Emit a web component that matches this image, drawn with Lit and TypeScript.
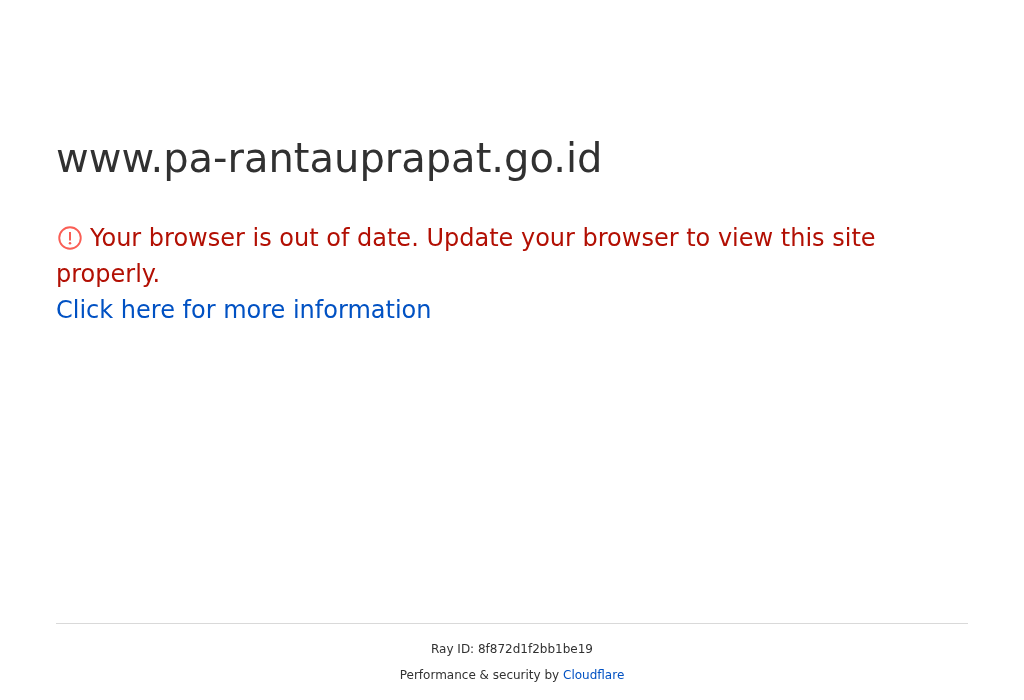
import { LitElement, html, css } from "lit";
import { customElement } from "lit/decorators.js";

@customElement("app-root")
export class AppRoot extends LitElement {
  static styles = css`
    :host {
      display: block;
      font-family: "DejaVu Sans", sans-serif;
      color: #313131;
    }
    .page {
      height: 700px;
      box-sizing: border-box;
      padding: 0 56px;
      display: flex;
      flex-direction: column;
      overflow: hidden;
      will-change: transform;
    }
    .main {
      flex: 1;
      padding-top: 128px;
    }
    h1 {
      margin: 0 0 32px;
      font-size: 40px;
      line-height: 60px;
      font-weight: 400;
    }
    .msg {
      font-size: 24px;
      line-height: 36px;
      color: #b20f03;
    }
    .msg svg {
      width: 28px;
      height: 28px;
      vertical-align: -6px;
      margin-right: 6px;
    }
    a {
      color: #0051c3;
      text-decoration: none;
    }
    .msg a {
      display: block;
    }
    footer {
      border-top: 1px solid #d9d9d9;
      padding-top: 16px;
      text-align: center;
      font-size: 12px;
      line-height: 18px;
      height: 60px;
    }
    footer div + div {
      margin-top: 8px;
    }
  `;

  render() {
    return html`<div class="page">
      <div class="main">
        <h1>www.pa-rantauprapat.go.id</h1>
        <div class="msg">
          <svg viewBox="0 0 28 28" fill="none">
            <circle cx="14" cy="14" r="10.75" stroke="#fa5e55" stroke-width="1.9"></circle>
            <path d="M14 8v8.4" stroke="#fa5e55" stroke-width="2"></path>
            <circle cx="14" cy="19.3" r="1.25" fill="#fa5e55"></circle>
          </svg>Your browser is out of date. Update your browser to view this site properly.
          <a href="#">Click here for more information</a>
        </div>
      </div>
      <footer>
        <div>Ray ID: 8f872d1f2bb1be19</div>
        <div>Performance &amp; security by <a href="#">Cloudflare</a></div>
      </footer>
    </div>`;
  }
}
